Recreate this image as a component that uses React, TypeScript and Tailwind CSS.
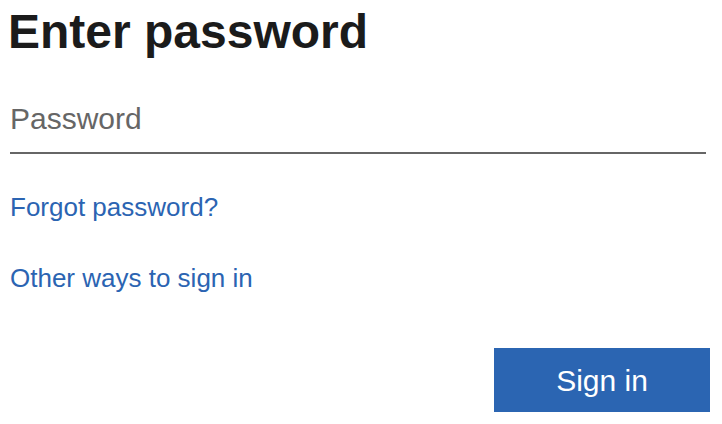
import React from 'react';

export default function App() {
  return (
    <div className="w-[722px] h-[424px] bg-white px-[10px] pt-[8px] font-['Liberation_Sans',Arial,sans-serif]">
      <h1 className="text-[48px] font-bold text-[#1b1b1b] leading-[48px] -ml-[2px]">Enter password</h1>
      <div className="mt-[45px] w-[696px] border-b-2 border-[#666666] pb-[15px]">
        <input
          type="password"
          placeholder="Password"
          className="block w-full h-[36px] bg-transparent text-[30px] leading-[36px] text-[#1b1b1b] placeholder-[#666666] focus:outline-none"
        />
      </div>
      <div className="mt-[38px] text-[26px] leading-[30px] text-[#2b64b2]">Forgot password?</div>
      <div className="mt-[41px] text-[26px] leading-[30px] text-[#2b64b2]">Other ways to sign in</div>
      <div className="flex justify-end mt-[55px] pr-[2px]">
        <button className="w-[216px] h-[64px] bg-[#2b65b2] text-white text-[30px]">Sign in</button>
      </div>
    </div>
  );
}
